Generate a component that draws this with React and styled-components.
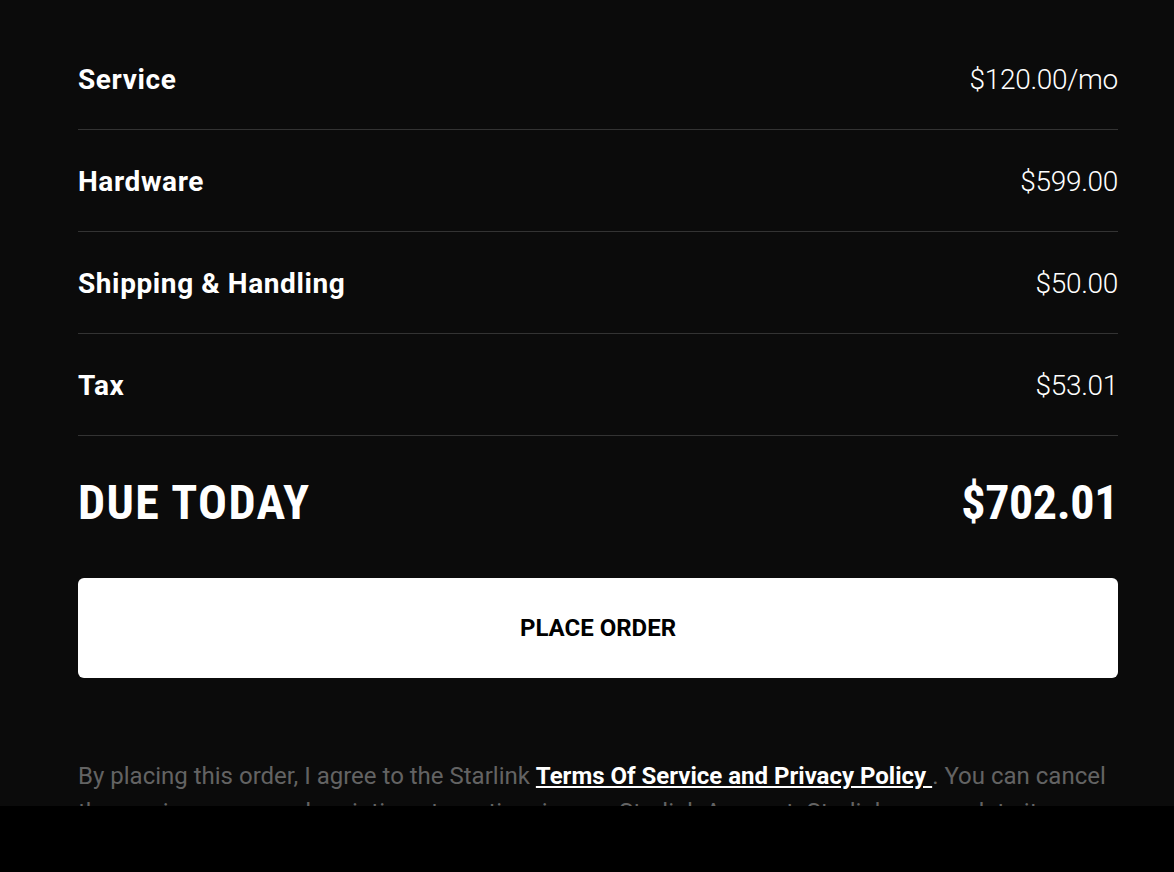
import React from 'react';
import styled, { createGlobalStyle } from 'styled-components';

const GlobalStyle = createGlobalStyle`
  html, body {
    margin: 0;
    padding: 0;
    background-color: #0b0b0b;
    font-family: Roboto, "Liberation Sans", sans-serif;
  }
`;

const StyledPage = styled.div`
  padding: 28px 56px 120px 78px;
  color: #fff;
`;

const StyledRow = styled.div`
  display: flex;
  align-items: center;
  justify-content: space-between;
  height: 101px;
  border-bottom: 1px solid #333;
`;

const StyledLabel = styled.span`
  font-family: Roboto, sans-serif;
  font-weight: 700;
  font-size: 28px;
  letter-spacing: 0.6px;
  padding-top: 2px;
`;

const StyledValue = styled.span`
  font-family: Roboto, sans-serif;
  font-weight: 300;
  font-size: 28px;
  letter-spacing: -0.3px;
  padding-top: 2px;
`;

const StyledTotalRow = styled.div`
  display: flex;
  align-items: center;
  justify-content: space-between;
  height: 132px;
`;

const StyledTotal = styled.span`
  font-family: "Roboto Condensed", Roboto, sans-serif;
  font-weight: 700;
  font-size: 48px;
  letter-spacing: ${props => (props.$wide ? '1.4px' : '-0.4px')};
`;

const StyledButton = styled.button`
  display: block;
  width: 100%;
  height: 100px;
  margin-top: 10px;
  border: none;
  border-radius: 6px;
  background-color: #fff;
  color: #000;
  font-family: Roboto, sans-serif;
  font-weight: 700;
  font-size: 24px;
  cursor: pointer;
`;

const StyledLegal = styled.p`
  margin: 80px 0 0;
  font-family: Roboto, sans-serif;
  font-size: 24px;
  line-height: 36px;
  color: #636363;
`;

const StyledLink = styled.a`
  color: #fff;
  font-weight: 700;
  text-decoration: underline;
`;

const StyledBottomBar = styled.div`
  position: fixed;
  left: 0;
  right: 0;
  bottom: 0;
  height: 66px;
  background-color: #000;
`;

const items = [
  { label: 'Service', value: '$120.00/mo' },
  { label: 'Hardware', value: '$599.00' },
  { label: 'Shipping & Handling', value: '$50.00' },
  { label: 'Tax', value: '$53.01' },
];

const App = () => (
  <>
    <GlobalStyle />
    <StyledPage>
      {items.map(item => (
        <StyledRow key={item.label}>
          <StyledLabel>{item.label}</StyledLabel>
          <StyledValue>{item.value}</StyledValue>
        </StyledRow>
      ))}
      <StyledTotalRow>
        <StyledTotal $wide>DUE TODAY</StyledTotal>
        <StyledTotal>$702.01</StyledTotal>
      </StyledTotalRow>
      <StyledButton>PLACE ORDER</StyledButton>
      <StyledLegal>
        By placing this order, I agree to the Starlink{' '}
        <StyledLink href="#">Terms Of Service and Privacy Policy </StyledLink>. You can cancel
        the service or your subscription at any time in your Starlink Account. Starlink may update its Service Terms
        from time to time.
      </StyledLegal>
    </StyledPage>
    <StyledBottomBar />
  </>
);

export default App;
